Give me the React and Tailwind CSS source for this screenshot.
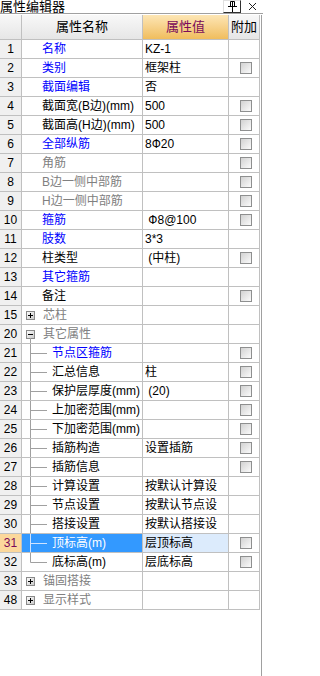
import React from "react";

const BLUE = "text-[#0000ff]";
const GRAY = "text-[#808080]";
const BLACK = "text-black";

const rows = [
  { n: "1", name: "名称", c: BLUE, v: "KZ-1" },
  { n: "2", name: "类别", c: BLUE, v: "框架柱", cb: true },
  { n: "3", name: "截面编辑", c: BLUE, v: "否" },
  { n: "4", name: "截面宽(B边)(mm)", c: BLACK, v: "500", cb: true },
  { n: "5", name: "截面高(H边)(mm)", c: BLACK, v: "500", cb: true },
  { n: "6", name: "全部纵筋", c: BLUE, v: "8Ф20", cb: true },
  { n: "7", name: "角筋", c: GRAY, cb: true },
  { n: "8", name: "B边一侧中部筋", c: GRAY, cb: true },
  { n: "9", name: "H边一侧中部筋", c: GRAY, cb: true },
  { n: "10", name: "箍筋", c: BLUE, v: "\u00a0Ф8@100", cb: true },
  { n: "11", name: "肢数", c: BLUE, v: "3*3" },
  { n: "12", name: "柱类型", c: BLACK, v: "\u00a0(中柱)", cb: true },
  { n: "13", name: "其它箍筋", c: BLUE },
  { n: "14", name: "备注", c: BLACK, cb: true },
  { n: "15", name: "芯柱", c: GRAY, node: "+" },
  { n: "20", name: "其它属性", c: GRAY, node: "-" },
  { n: "21", name: "节点区箍筋", c: BLUE, child: true, cb: true },
  { n: "22", name: "汇总信息", c: BLACK, child: true, v: "柱", cb: true },
  { n: "23", name: "保护层厚度(mm)", c: BLACK, child: true, v: "\u00a0(20)", cb: true },
  { n: "24", name: "上加密范围(mm)", c: BLACK, child: true, cb: true },
  { n: "25", name: "下加密范围(mm)", c: BLACK, child: true, cb: true },
  { n: "26", name: "插筋构造", c: BLACK, child: true, v: "设置插筋", cb: true },
  { n: "27", name: "插筋信息", c: BLACK, child: true, cb: true },
  { n: "28", name: "计算设置", c: BLACK, child: true, v: "按默认计算设" },
  { n: "29", name: "节点设置", c: BLACK, child: true, v: "按默认节点设" },
  { n: "30", name: "搭接设置", c: BLACK, child: true, v: "按默认搭接设" },
  { n: "31", name: "顶标高(m)", c: BLACK, child: true, v: "层顶标高", cb: true, sel: true },
  { n: "32", name: "底标高(m)", c: BLACK, child: true, last: true, v: "层底标高", cb: true },
  { n: "33", name: "锚固搭接", c: GRAY, node: "+" },
  { n: "48", name: "显示样式", c: GRAY, node: "+" },
];

function CheckBox() {
  return (
    <div className="w-[12px] h-[12px] border border-[#8e8f8f] bg-gradient-to-br from-[#d2d2d2] to-[#fbfbfb]" />
  );
}

function NodeBox({ sign }) {
  return (
    <svg width="9" height="9" viewBox="0 0 9 9" className="shrink-0">
      <defs>
        <linearGradient id="nb" x1="0" y1="0" x2="1" y2="1">
          <stop offset="0" stopColor="#ffffff" />
          <stop offset="1" stopColor="#c8c8c8" />
        </linearGradient>
      </defs>
      <rect x="0.5" y="0.5" width="8" height="8" fill="url(#nb)" stroke="#8a8a8a" />
      <line x1="2" y1="4.5" x2="7" y2="4.5" stroke="#000" />
      {sign === "+" && <line x1="4.5" y1="2" x2="4.5" y2="7" stroke="#000" />}
    </svg>
  );
}

function Branch({ last, sel }) {
  const col = sel ? "#cfe3ff" : "#a0a0a0";
  return (
    <svg width="30" height="18" viewBox="0 0 30 18" className="shrink-0">
      <line x1="8.5" y1="0" x2="8.5" y2={last ? 9.5 : 18} stroke={col} />
      <line x1="8.5" y1="9.5" x2="25" y2="9.5" stroke={col} />
    </svg>
  );
}

function Row({ r }) {
  return (
    <div className="flex h-[19px] border-b border-[#c0c0c0]">
      <div
        className={
          "w-[22px] shrink-0 border-r border-[#c0c0c0] flex items-center justify-center " +
          (r.sel ? "bg-[#fcd89c] text-[#7a0a5a]" : "bg-[#f0f0f0] text-black")
        }
      >
        {r.n}
      </div>
      <div
        className={
          "w-[121px] shrink-0 border-r border-[#c0c0c0] flex items-center whitespace-nowrap overflow-hidden relative " +
          (r.sel ? "bg-[#3399ff] text-white" : r.c)
        }
      >
        {r.node ? (
          <>
            <div className="pl-[4px] pr-[8px] flex items-center h-full relative">
              <NodeBox sign={r.node} />
              {r.node === "-" && (
                <svg width="1" height="5" className="absolute left-[8px] bottom-0">
                  <line x1="0.5" y1="0" x2="0.5" y2="5" stroke="#a0a0a0" />
                </svg>
              )}
            </div>
            <span>{r.name}</span>
          </>
        ) : r.child ? (
          <>
            <Branch last={r.last} sel={r.sel} />
            <span>{r.name}</span>
          </>
        ) : (
          <span className="pl-[20px]">{r.name}</span>
        )}
      </div>
      <div
        className={
          "w-[86px] shrink-0 border-r border-[#c0c0c0] flex items-center pl-[2px] whitespace-nowrap overflow-hidden text-black " +
          (r.sel ? "bg-[#dcebfc]" : "")
        }
      >
        {r.v || ""}
      </div>
      <div className="w-[31px] shrink-0 border-r border-[#c0c0c0] flex items-center pl-[11px]">
        {r.cb && <CheckBox />}
      </div>
    </div>
  );
}

export default function App() {
  return (
    <div
      className="w-[263px] h-[676px] bg-white text-[12px] leading-[12px] flex flex-col overflow-hidden"
      style={{ fontFamily: '"Liberation Sans", "Noto Sans CJK SC", sans-serif' }}
    >
      {/* title bar */}
      <div className="h-[14px] shrink-0 flex items-start border-b border-[#a0a0a0]">
        <div className="text-[13px] leading-[13px] text-black flex-1">属性编辑器</div>
        <div className="w-[18px] h-[13px] mr-[4px] border-r border-b border-[#303030] border-l border-t border-l-[#e0e0e0] border-t-[#e0e0e0] flex items-center justify-center">
          <svg width="11" height="11" viewBox="0 0 11 11">
            <path d="M3.5 0.5h4v5h-4z" fill="none" stroke="#000" />
            <line x1="5.5" y1="1" x2="5.5" y2="5" stroke="#000" />
            <line x1="1" y1="5.5" x2="10" y2="5.5" stroke="#000" />
            <line x1="5.5" y1="6" x2="5.5" y2="11" stroke="#000" />
          </svg>
        </div>
        <div className="w-[14px] h-[13px] flex items-center justify-center mr-[4px]">
          <svg width="9" height="9" viewBox="0 0 9 9">
            <path d="M1 1L8 8M8 1L1 8" stroke="#202020" strokeWidth="1" />
          </svg>
        </div>
      </div>

      <div className="flex flex-1 pt-[1px]">
        <div className="w-[260px] flex flex-col">
          {/* header */}
          <div className="flex h-[25px] border-b border-[#c0c0c0]">
            <div className="w-[22px] shrink-0 border-r border-[#c0c0c0] bg-gradient-to-b from-[#f8f8f8] to-[#e6e6e6]" />
            <div className="w-[121px] shrink-0 border-r border-[#c0c0c0] bg-gradient-to-b from-[#f8f8f8] to-[#e6e6e6] flex items-center justify-center text-[13px] text-black">
              属性名称
            </div>
            <div className="w-[86px] shrink-0 border-r border-[#c0c0c0] bg-gradient-to-b from-[#fde6b4] to-[#f0bd5c] flex items-center justify-center text-[13px] text-[#7a0a5a]">
              属性值
            </div>
            <div className="w-[31px] shrink-0 border-r border-[#c0c0c0] bg-gradient-to-b from-[#f8f8f8] to-[#e6e6e6] flex items-center justify-center text-[13px] text-black">
              附加
            </div>
          </div>
          {rows.map((r) => (
            <Row key={r.n} r={r} />
          ))}
        </div>
        <div className="w-[1px]" />
        <div className="w-[1px] bg-[#a0a0a0]" />
      </div>
    </div>
  );
}
